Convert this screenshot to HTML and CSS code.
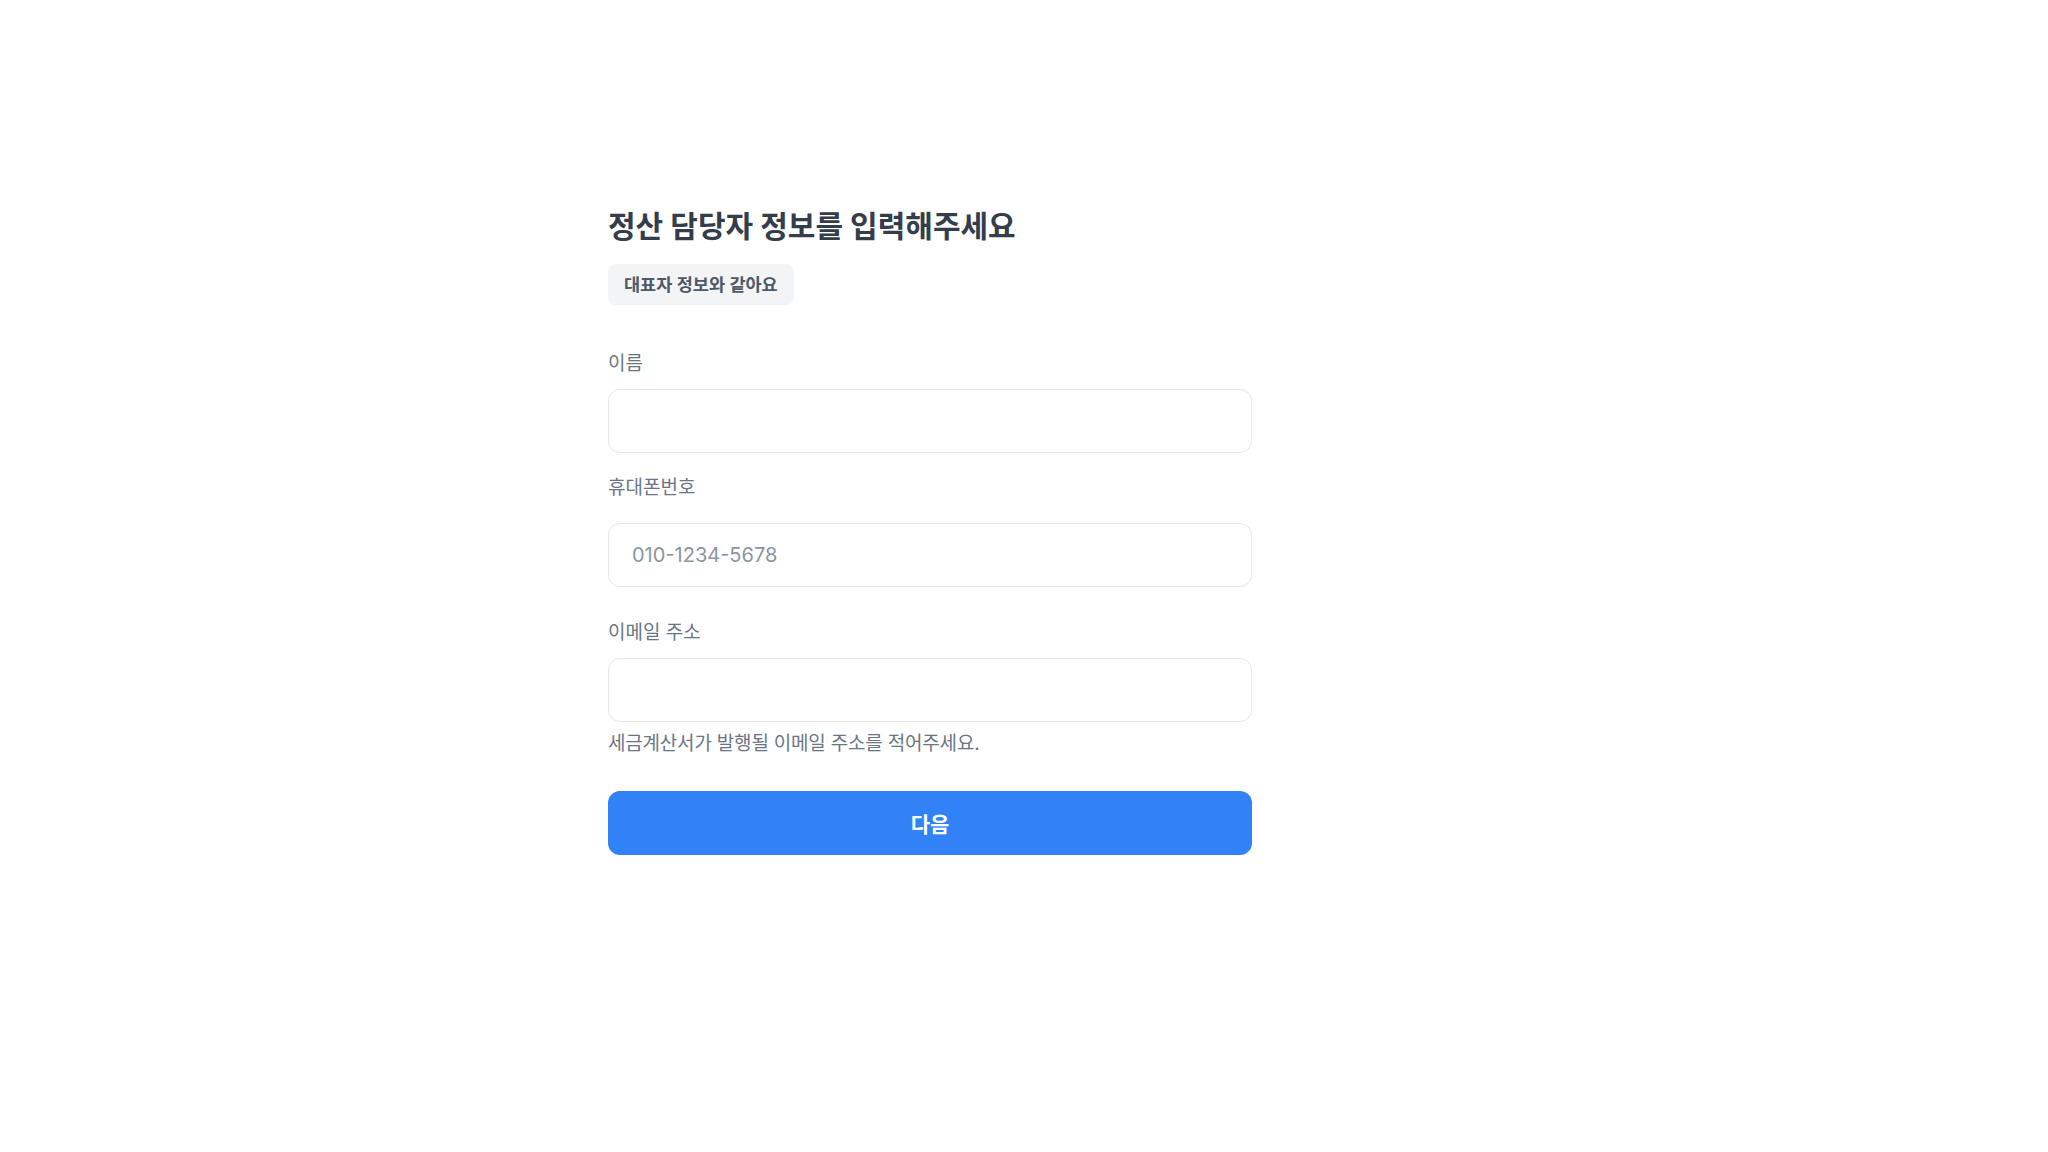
FILE: index.html
```html
<!DOCTYPE html>
<html lang="ko">
<head>
<meta charset="utf-8">
<title>정산 담당자 정보</title>
<link rel="stylesheet" href="styles.css">
</head>
<body>
<main class="page">
  <form class="form">
    <h1 class="title">정산 담당자 정보를 입력해주세요</h1>
    <button type="button" class="chip">대표자 정보와 같아요</button>

    <div class="field field-name">
      <label class="label" for="name">이름</label>
      <input class="input" id="name" type="text">
    </div>

    <div class="field field-phone">
      <label class="label" for="phone">휴대폰번호</label>
      <input class="input" id="phone" type="tel" placeholder="010-1234-5678">
    </div>

    <div class="field field-email">
      <label class="label" for="email">이메일 주소</label>
      <input class="input" id="email" type="email">
      <p class="help">세금계산서가 발행될 이메일 주소를 적어주세요.</p>
    </div>

    <button type="button" class="submit">다음</button>
  </form>
</main>
</body>
</html>
```
FILE: styles.css
```css
* { box-sizing: border-box; }

html, body {
  margin: 0;
  padding: 0;
  background: #ffffff;
}

body {
  font-family: Inter, "Noto Sans CJK KR", "Noto Sans", sans-serif;
  color: #333d4b;
}

.page {
  padding-top: 208px;
  padding-left: 608px;
}

.form {
  width: 644px;
  display: flex;
  flex-direction: column;
  align-items: flex-start;
}

.title {
  margin: 0;
  font-size: 30px;
  line-height: 36px;
  font-weight: 700;
  letter-spacing: 0;
  color: #333d4b;
}

.chip {
  margin-top: 20px;
  border: none;
  background: #f2f4f6;
  color: #4e5968;
  font-family: inherit;
  font-size: 17.5px;
  font-weight: 600;
  line-height: 25px;
  padding: 8px 16px;
  border-radius: 8px;
}

.field {
  width: 100%;
  display: flex;
  flex-direction: column;
}

.field-name { margin-top: 47px; }
.field-phone { margin-top: 23px; }
.field-email { margin-top: 34px; }

.label {
  font-size: 19px;
  line-height: 24px;
  color: #6b7684;
}

.field-name .label { margin-bottom: 13px; }
.field-phone .label { margin-bottom: 23px; }
.field-email .label { margin-bottom: 13px; }

.input {
  width: 100%;
  height: 64px;
  border: 1px solid #e5e8eb;
  border-radius: 12px;
  padding: 0 23px;
  font-family: Inter, "Noto Sans CJK KR", sans-serif;
  font-size: 20px;
  color: #333d4b;
  outline: none;
  background: #ffffff;
}

.input::placeholder {
  color: #8b95a1;
}

.help {
  margin: 10px 0 0;
  font-size: 19px;
  line-height: 24px;
  color: #6b7684;
  letter-spacing: -0.2px;
}

.submit {
  margin-top: 35px;
  width: 100%;
  height: 64px;
  border: none;
  border-radius: 12px;
  background: #3182f6;
  color: #ffffff;
  font-family: inherit;
  font-size: 21px;
  font-weight: 700;
}
```
